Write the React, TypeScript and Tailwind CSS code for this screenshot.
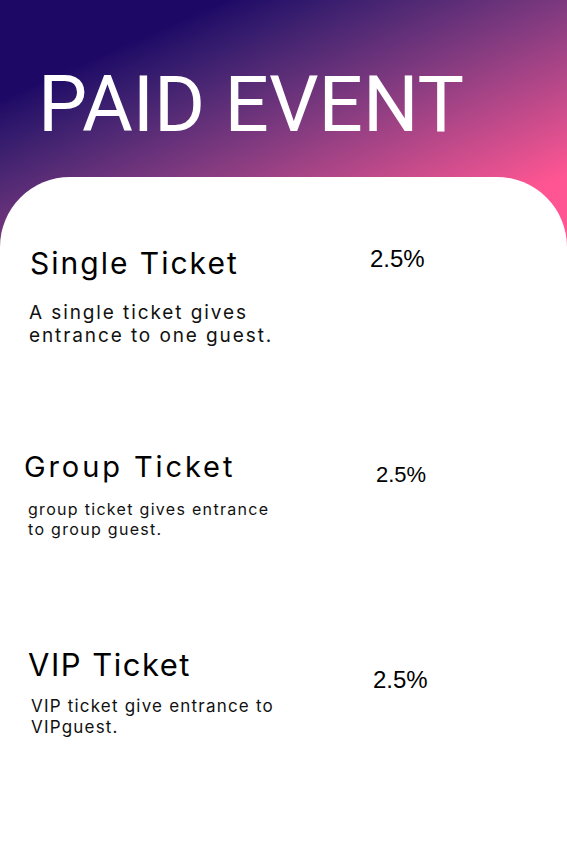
const tickets = [
  {
    name: "Single Ticket",
    desc: ["A single ticket gives", "entrance to one guest."],
    fee: "2.5%",
    row: "pt-[68px] h-[272px]",
    head: "ml-[30px] text-[30px] tracking-[2px]",
    body: "ml-[29px] mt-[20px] text-[19px] leading-[23px] tracking-[1.9px]",
    feeCls: "ml-[30px] mt-[0px] text-[24px]",
  },
  {
    name: "Group Ticket",
    desc: ["group ticket gives entrance", "to group guest."],
    fee: "2.5%",
    row: "h-[200px]",
    head: "ml-[24px] text-[29px] tracking-[2.9px]",
    body: "ml-[28px] mt-[14px] text-[16px] leading-[20px] tracking-[1.3px]",
    feeCls: "ml-[36px] mt-[12px] text-[22px]",
  },
  {
    name: "VIP Ticket",
    desc: ["VIP ticket give entrance to", "VIPguest."],
    fee: "2.5%",
    row: "-mt-[2px]",
    head: "ml-[28px] text-[31px] tracking-[1.5px]",
    body: "ml-[31px] mt-[13px] text-[17px] leading-[21px] tracking-[1.2px]",
    feeCls: "ml-[33px] mt-[19px] text-[24px]",
  },
];

export default function App() {
  return (
    <div className="w-[567px] h-[853px] overflow-hidden bg-white">
      <div className="h-[250px] bg-linear-to-br from-[#1e0866] from-20% to-[#ff5592] to-85% pl-[38px] pt-[60px]">
        <h1 className="text-white text-[78px] leading-[90px] font-normal [font-family:Roboto,sans-serif]">
          PAID EVENT
        </h1>
      </div>
      <div className="-mt-[73px] bg-white rounded-t-[70px] h-[676px] [font-family:Inter,sans-serif] text-black">
        {tickets.map((t, i) => (
          <div key={i} className={`flex items-start ${t.row}`}>
            <div className="w-[340px] shrink-0">
              <h2 className={`${t.head} leading-[36px] font-normal`}>{t.name}</h2>
              <p className={`${t.body} text-[#111]`}>
                {t.desc[0]}
                <br />
                {t.desc[1]}
              </p>
            </div>
            <div className={`${t.feeCls} leading-[28px] [font-family:'Liberation_Sans',Arial,sans-serif]`}>
              {t.fee}
            </div>
          </div>
        ))}
      </div>
    </div>
  );
}
